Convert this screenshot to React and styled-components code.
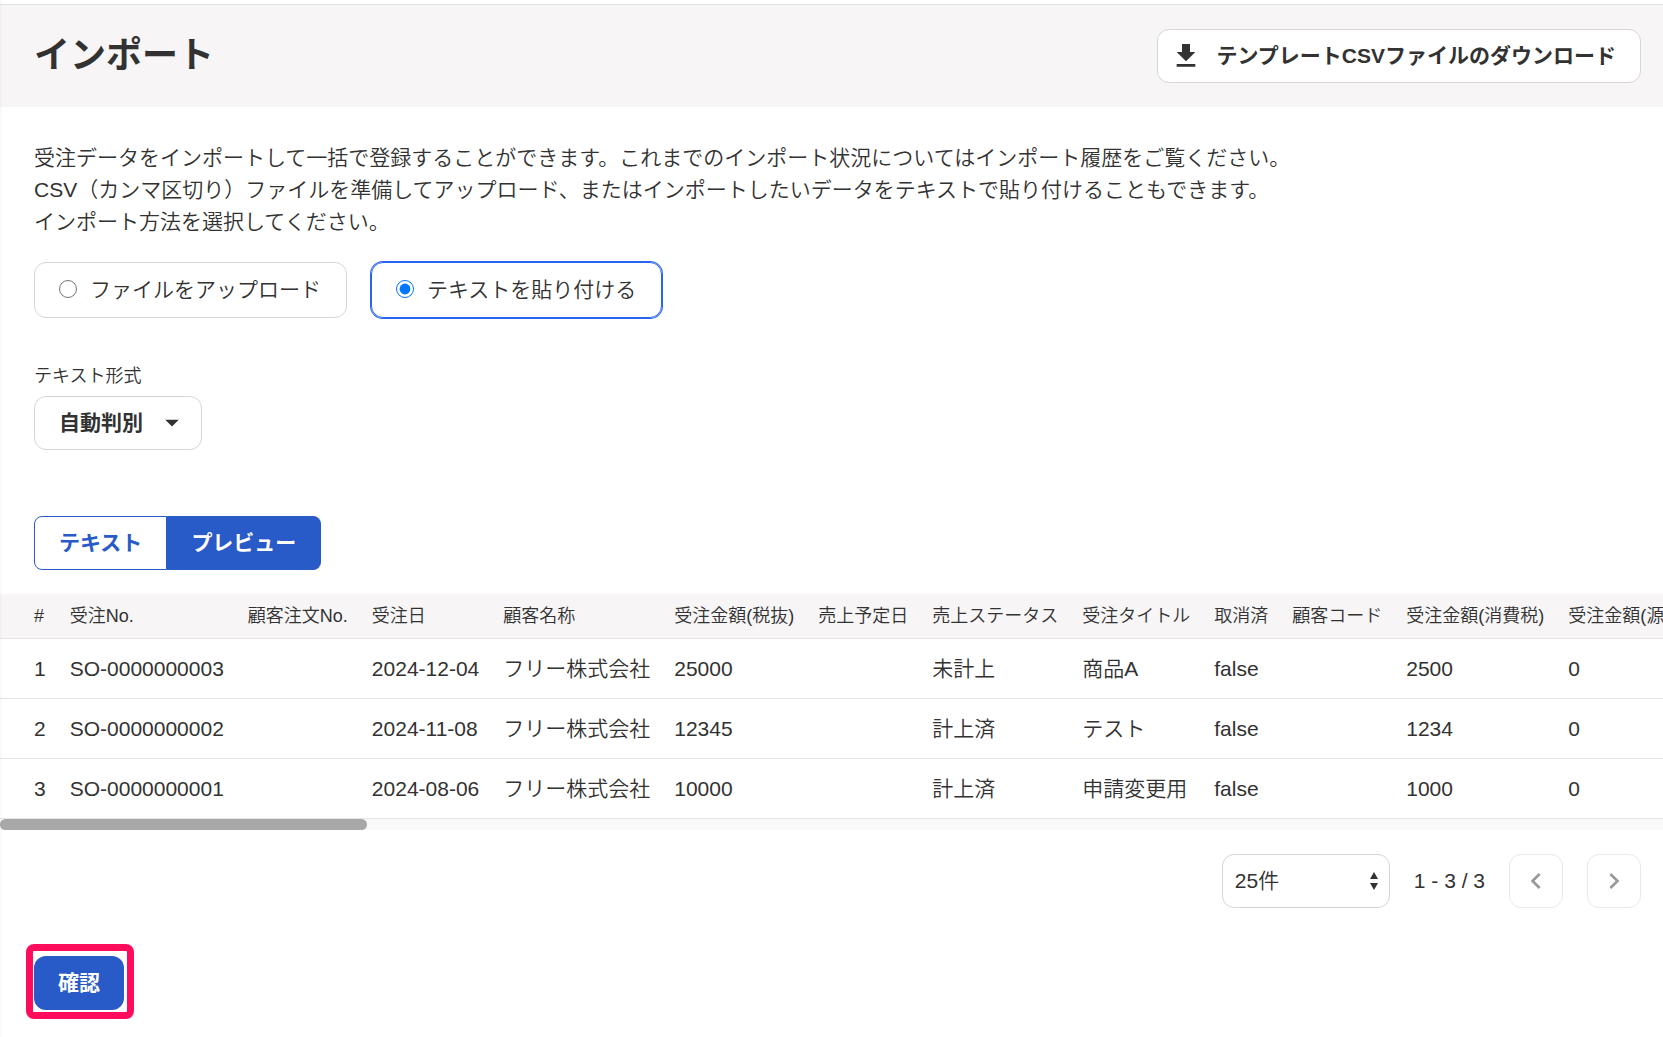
import React, { useEffect, useRef, useState } from 'react';
import styled, { createGlobalStyle, css } from 'styled-components';

const GlobalStyle = createGlobalStyle`
  * {
    box-sizing: border-box;
  }

  body {
    margin: 0;
    background: #fff;
    color: #323232;
    font-family: 'Liberation Sans', 'Noto Sans CJK JP', sans-serif;
    font-size: 21px;
    font-weight: 350;
    line-height: 32px;
  }

  button,
  select,
  input {
    font: inherit;
    color: inherit;
    margin: 0;
  }
`;

const Page = styled.div`
  position: relative;
  min-height: 100vh;
  padding-top: 4px;

  &::before {
    content: '';
    position: absolute;
    top: 0;
    bottom: 0;
    left: 0;
    width: 2px;
    background: rgba(0, 0, 0, 0.02);
  }
`;

const PageHeader = styled.header`
  display: flex;
  align-items: center;
  justify-content: space-between;
  padding: 24px 22px 24px 34px;
  border-top: 1px solid #e1dfe1;
  background: #f7f5f6;

  h1 {
    margin: 0;
    font-size: 36px;
    font-weight: 700;
    line-height: 48px;
  }
`;

const box = css`
  height: 54px;
  border: 1px solid #d7d5d7;
  border-radius: 12px;
  background: #fff;
`;

const DownloadButton = styled.button`
  ${box}
  display: flex;
  align-items: center;
  gap: 14px;
  padding: 0 24px 0 12px;
  font-weight: 700;
  cursor: pointer;

  svg {
    width: 32px;
    height: 32px;
    fill: #323232;
  }
`;

const Section = styled.section`
  padding: 0 34px;
`;

const Description = styled.p`
  margin: 0;
  padding: 35px 0 24px;
`;

const RadioGroup = styled.div`
  display: flex;
  gap: 24px;
`;

const RadioCard = styled.label`
  display: flex;
  align-items: center;
  gap: 13px;
  height: 56px;
  padding: 0 25px 0 24px;
  border: 1px solid ${({ $checked }) => ($checked ? '#2864f0' : '#d7d5d7')};
  border-radius: 12px;
  box-shadow: ${({ $checked }) => ($checked ? '0 0 0 1px #2864f0' : 'none')};
  cursor: pointer;

  input {
    width: 18px;
    height: 18px;
    margin-bottom: 3px;
  }
`;

const FieldLabel = styled.label`
  display: block;
  margin-top: 42px;
  padding-bottom: 4px;
  font-size: 18px;
`;

const SelectBox = styled.div`
  position: relative;
  width: 168px;

  select {
    ${box}
    width: 100%;
    padding: 0 ${({ $bold }) => ($bold ? 24 : 12)}px;
    font-weight: ${({ $bold }) => ($bold ? 700 : 350)};
    appearance: none;
    cursor: pointer;
  }

  svg {
    position: absolute;
    top: 50%;
    right: ${({ $bold }) => ($bold ? 23 : 12)}px;
    transform: translateY(-50%);
    fill: #323232;
    pointer-events: none;
  }
`;

const Tabs = styled.div`
  display: flex;
  padding: 66px 0 24px;
`;

const Tab = styled.button`
  height: 54px;
  padding: 0 24px;
  border: 1px solid #285ac8;
  background: ${({ $active }) => ($active ? '#285ac8' : '#fff')};
  color: ${({ $active }) => ($active ? '#fff' : '#285ac8')};
  font-weight: 700;
  cursor: pointer;

  &:first-child {
    border-radius: 8px 0 0 8px;
  }

  &:last-child {
    border-left: 0;
    border-radius: 0 8px 8px 0;
  }
`;

const TableScroll = styled.div`
  overflow-x: auto;
  scrollbar-width: none;
`;

const Table = styled.table`
  width: 453%;
  border-collapse: separate;
  border-spacing: 0;
  white-space: nowrap;

  th,
  td {
    padding: 0 12px;
    border-bottom: 1px solid #e5e3e5;
    text-align: left;
  }

  th {
    height: 45px;
    background: #f7f5f6;
    font-size: 18px;
    font-weight: 350;
  }

  td {
    height: 60px;
  }

  th:first-child,
  td:first-child {
    padding-left: 34px;
  }

  th:last-child {
    width: 100%;
  }
`;

const ScrollTrack = styled.div`
  height: 11px;
  overflow: hidden;
  background: #f9f9f9;
`;

const ScrollThumb = styled.div`
  height: 100%;
  border-radius: 6px;
  background: #a8a8a8;
`;

const Pagination = styled.div`
  display: flex;
  align-items: center;
  justify-content: flex-end;
  gap: 24px;
  padding: 24px 22px 0 34px;
`;

const PageButton = styled.button`
  ${box}
  display: flex;
  align-items: center;
  justify-content: center;
  width: 54px;
  padding: 0;
  border-color: #ebe9eb;

  svg {
    width: 32px;
    height: 32px;
    fill: #989898;
  }
`;

const Footer = styled.footer`
  padding: 48px 34px 26px;
`;

const Highlight = styled.div`
  position: relative;
  display: inline-flex;

  &::after {
    content: '';
    position: absolute;
    inset: -12px -10px -9px -8px;
    border: 7px solid #ff0d5c;
    border-radius: 8px;
    pointer-events: none;
  }
`;

const ConfirmButton = styled.button`
  height: 54px;
  padding: 0 24px;
  border: 0;
  border-radius: 12px;
  background: #285ac8;
  color: #fff;
  font-weight: 700;
  cursor: pointer;
`;

const methods = [
  { value: 'file', label: 'ファイルをアップロード' },
  { value: 'text', label: 'テキストを貼り付ける' },
];

const columns = [
  '#',
  '受注No.',
  '顧客注文No.',
  '受注日',
  '顧客名称',
  '受注金額(税抜)',
  '売上予定日',
  '売上ステータス',
  '受注タイトル',
  '取消済',
  '顧客コード',
  '受注金額(消費税)',
  '受注金額(源泉所得税)',
];

const rows = [
  ['1', 'SO-0000000003', '', '2024-12-04', 'フリー株式会社', '25000', '', '未計上', '商品A', 'false', '', '2500', '0'],
  ['2', 'SO-0000000002', '', '2024-11-08', 'フリー株式会社', '12345', '', '計上済', 'テスト', 'false', '', '1234', '0'],
  ['3', 'SO-0000000001', '', '2024-08-06', 'フリー株式会社', '10000', '', '計上済', '申請変更用', 'false', '', '1000', '0'],
];

function PreviewTable() {
  const scrollRef = useRef(null);
  const [thumb, setThumb] = useState({ width: 0, left: 0 });

  const updateThumb = () => {
    const { clientWidth, scrollWidth, scrollLeft } = scrollRef.current;
    setThumb({
      width: (clientWidth / scrollWidth) * 100,
      left: (scrollLeft / scrollWidth) * 100,
    });
  };

  useEffect(() => {
    updateThumb();
    window.addEventListener('resize', updateThumb);
    return () => window.removeEventListener('resize', updateThumb);
  }, []);

  return (
    <>
      <TableScroll ref={scrollRef} onScroll={updateThumb}>
        <Table>
          <thead>
            <tr>
              {columns.map((column) => (
                <th key={column} scope="col">{column}</th>
              ))}
            </tr>
          </thead>
          <tbody>
            {rows.map((row) => (
              <tr key={row[0]}>
                {row.map((cell, index) => (
                  <td key={columns[index]}>{cell}</td>
                ))}
              </tr>
            ))}
          </tbody>
        </Table>
      </TableScroll>
      <ScrollTrack>
        <ScrollThumb style={{ width: `${thumb.width}%`, marginLeft: `${thumb.left}%` }} />
      </ScrollTrack>
    </>
  );
}

function App() {
  const [method, setMethod] = useState('text');
  const [tab, setTab] = useState('preview');

  return (
    <>
      <GlobalStyle />
      <Page>
        <PageHeader>
          <h1>インポート</h1>
          <DownloadButton type="button">
            <svg viewBox="0 0 24 24" aria-hidden="true">
              <path d="M19 9h-4V3H9v6H5l7 7 7-7zM5 18v2h14v-2H5z" />
            </svg>
            テンプレートCSVファイルのダウンロード
          </DownloadButton>
        </PageHeader>
        <Section>
          <Description>
            受注データをインポートして一括で登録することができます。これまでのインポート状況についてはインポート履歴をご覧ください。
            <br />
            CSV（カンマ区切り）ファイルを準備してアップロード、またはインポートしたいデータをテキストで貼り付けることもできます。
            <br />
            インポート方法を選択してください。
          </Description>
          <RadioGroup>
            {methods.map(({ value, label }) => (
              <RadioCard key={value} $checked={method === value}>
                <input
                  type="radio"
                  name="method"
                  value={value}
                  checked={method === value}
                  onChange={() => setMethod(value)}
                />
                {label}
              </RadioCard>
            ))}
          </RadioGroup>
          <FieldLabel htmlFor="text-format">テキスト形式</FieldLabel>
          <SelectBox $bold>
            <select id="text-format">
              <option>自動判別</option>
            </select>
            <svg width="14" height="7" viewBox="0 0 14 7" aria-hidden="true">
              <path d="M0 0h14L7 7z" />
            </svg>
          </SelectBox>
          <Tabs>
            <Tab type="button" $active={tab === 'text'} onClick={() => setTab('text')}>
              テキスト
            </Tab>
            <Tab type="button" $active={tab === 'preview'} onClick={() => setTab('preview')}>
              プレビュー
            </Tab>
          </Tabs>
        </Section>
        <PreviewTable />
        <Pagination>
          <SelectBox>
            <select aria-label="表示件数">
              <option>25件</option>
            </select>
            <svg width="8" height="18" viewBox="0 0 8 18" aria-hidden="true">
              <path d="M0 7h8L4 0zM0 11h8L4 18z" />
            </svg>
          </SelectBox>
          <span>1 - 3 / 3</span>
          <PageButton type="button" aria-label="前へ" disabled>
            <svg viewBox="0 0 24 24" aria-hidden="true">
              <path d="M15.410 7.410 14 6l-6 6 6 6 1.410-1.410L10.830 12z" />
            </svg>
          </PageButton>
          <PageButton type="button" aria-label="次へ" disabled>
            <svg viewBox="0 0 24 24" aria-hidden="true">
              <path d="M10 6 8.590 7.410 13.170 12l-4.580 4.590L10 18l6-6z" />
            </svg>
          </PageButton>
        </Pagination>
        <Footer>
          <Highlight>
            <ConfirmButton type="button">確認</ConfirmButton>
          </Highlight>
        </Footer>
      </Page>
    </>
  );
}

export default App;
